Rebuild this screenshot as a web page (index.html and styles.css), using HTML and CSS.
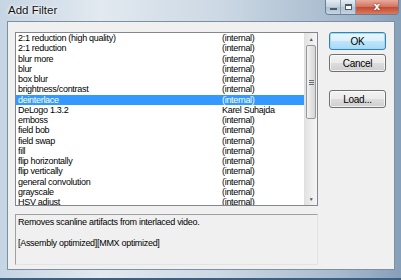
FILE: index.html
```html
<!DOCTYPE html>
<html lang="en">

<head>
    <meta charset="UTF-8">
    <link rel="stylesheet" href="styles.css">
    <title>Add Filter</title>
</head>

<body>
    <div class="window">
        <div class="titlebar">
            <span class="title">Add Filter</span>
            <div class="caption">
                <div class="cap min"><span class="min-glyph"></span></div>
                <div class="cap max"><span class="max-glyph"></span></div>
                <div class="cap close">x</div>
            </div>
        </div>

        <div class="client">
            <div class="left">
                <div class="list">
                    <div class="rows">
                        <div class="row"><span class="name">2:1 reduction (high quality)</span><span>(internal)</span></div>
                        <div class="row"><span class="name">2:1 reduction</span><span>(internal)</span></div>
                        <div class="row"><span class="name">blur more</span><span>(internal)</span></div>
                        <div class="row"><span class="name">blur</span><span>(internal)</span></div>
                        <div class="row"><span class="name">box blur</span><span>(internal)</span></div>
                        <div class="row"><span class="name">brightness/contrast</span><span>(internal)</span></div>
                        <div class="row selected"><span class="name">deinterlace</span><span>(internal)</span></div>
                        <div class="row"><span class="name">DeLogo 1.3.2</span><span>Karel Suhajda</span></div>
                        <div class="row"><span class="name">emboss</span><span>(internal)</span></div>
                        <div class="row"><span class="name">field bob</span><span>(internal)</span></div>
                        <div class="row"><span class="name">field swap</span><span>(internal)</span></div>
                        <div class="row"><span class="name">fill</span><span>(internal)</span></div>
                        <div class="row"><span class="name">flip horizontally</span><span>(internal)</span></div>
                        <div class="row"><span class="name">flip vertically</span><span>(internal)</span></div>
                        <div class="row"><span class="name">general convolution</span><span>(internal)</span></div>
                        <div class="row"><span class="name">grayscale</span><span>(internal)</span></div>
                        <div class="row"><span class="name">HSV adjust</span><span>(internal)</span></div>
                    </div>
                    <div class="scrollbar">
                        <div class="arrow">&#9650;</div>
                        <div class="track">
                            <div class="thumb"><span class="grip"></span></div>
                        </div>
                        <div class="arrow">&#9660;</div>
                    </div>
                </div>

                <div class="desc">
                    <p>Removes scanline artifacts from interlaced video.</p>
                    <p>[Assembly optimized][MMX optimized]</p>
                </div>
            </div>

            <div class="buttons">
                <div class="btn default">OK</div>
                <div class="btn">Cancel</div>
                <div class="btn load">Load...</div>
            </div>
        </div>
    </div>
</body>

</html>
```

FILE: styles.css
```css
* {
    margin: 0;
    padding: 0;
    box-sizing: border-box;
}

body {
    width: 401px;
    height: 280px;
    overflow: hidden;
    font-family: "Liberation Sans", Arial, sans-serif;
    background: #6f8fae;
}

.window {
    width: 401px;
    height: 280px;
    display: flex;
    flex-direction: column;
    padding: 0 6px 8px 7px;
    background: linear-gradient(to right, #c6d5e3 0%, #e2e9f0 25%, #ccd8e4 55%, #a6bacd 85%, #86a0b9 100%);
    border-bottom: 2px solid #3d5f80;
}

/* title bar */

.titlebar {
    height: 21px;
    display: flex;
    justify-content: space-between;
    align-items: flex-start;
}

.title {
    font-size: 11.5px;
    padding: 4px 0 0 1px;
    color: #111;
    text-shadow: 0 0 4px #fff, 0 0 2px #fff;
}

.caption {
    display: flex;
    margin-right: -4px;
    border: 1px solid #6d7f94;
    border-top: none;
    border-radius: 0 0 4px 4px;
    overflow: hidden;
}

.cap {
    height: 14px;
    width: 15px;
    display: flex;
    justify-content: center;
    align-items: center;
    background: linear-gradient(to bottom, #e4ebf2, #c3d0dd 50%, #aebfcf 51%, #c6d4e2);
    border-right: 1px solid #8b9cb0;
}

.min-glyph {
    width: 7px;
    height: 2px;
    margin-top: 4px;
    background: #fff;
    border: 1px solid #4c5b6b;
}

.max-glyph {
    width: 7px;
    height: 6px;
    border: 1px solid #4c5b6b;
    border-top-width: 2px;
    background: #fff;
}

.cap.close {
    width: 42px;
    border-right: none;
    background: linear-gradient(to bottom, #e9a99c, #d0725f 50%, #c24b33 51%, #d97a5e);
    color: #fff;
    font-family: "DejaVu Sans", sans-serif;
    font-weight: bold;
    font-size: 10px;
    line-height: 10px;
    text-shadow: 0 0 2px #6b1a0e;
}

/* client area */

.client {
    flex: 1;
    display: flex;
    gap: 11px;
    padding: 10px 0 0 7px;
    background: #f0f0f0;
    border: 1px solid #7d8fa3;
    font-size: 9px;
    letter-spacing: -0.3px;
    color: #000;
}

.left {
    width: 303px;
    display: flex;
    flex-direction: column;
    gap: 8px;
}

.list {
    height: 174px;
    display: flex;
    background: #fff;
    border: 1px solid #828790;
}

.rows {
    flex: 1;
    overflow: hidden;
}

.row {
    display: flex;
    height: 10.25px;
    line-height: 10.25px;
    padding-left: 2px;
    white-space: nowrap;
}

.row .name {
    width: 204px;
}

.row.selected {
    background: #3399ff;
    color: #fff;
}

.scrollbar {
    width: 13px;
    display: flex;
    flex-direction: column;
    background: linear-gradient(to right, #e3e3e3, #f5f5f5);
    border-left: 1px solid #e0e0e0;
}

.arrow {
    height: 12px;
    font-size: 5px;
    line-height: 12px;
    text-align: center;
    color: #555;
}

.track {
    flex: 1;
}

.thumb {
    height: 74px;
    margin: 0 1px;
    display: flex;
    justify-content: center;
    align-items: center;
    border: 1px solid #979797;
    border-radius: 2px;
    background: linear-gradient(to right, #f3f3f3, #e4e4e4 50%, #d6d6d6);
}

.grip {
    width: 5px;
    height: 5px;
    border-top: 1px solid #6e6e6e;
    border-bottom: 1px solid #6e6e6e;
    background: linear-gradient(#6e6e6e, #6e6e6e) center / 100% 1px no-repeat;
}

.desc {
    height: 51px;
    padding: 2px 2px;
    border: 1px solid #a0a0a0;
    border-right-color: #e3e3e3;
    border-bottom-color: #e3e3e3;
}

.desc p {
    line-height: 10px;
    margin-bottom: 11px;
}

/* buttons */

.buttons {
    width: 57px;
    display: flex;
    flex-direction: column;
    gap: 4px;
}

.btn {
    height: 18px;
    display: flex;
    justify-content: center;
    align-items: center;
    font-size: 10px;
    border: 1px solid #707070;
    border-radius: 3px;
    background: linear-gradient(to bottom, #f2f2f2, #ebebeb 50%, #dddddd 51%, #cfcfcf);
    box-shadow: inset 0 0 0 1px rgba(255, 255, 255, 0.7);
}

.btn.default {
    border-color: #3c7fb1;
    background: linear-gradient(to bottom, #eaf6fd, #d9f0fc 50%, #bee6fd 51%, #a7d9f5);
    box-shadow: inset 0 0 0 1px #9ddcf5;
}

.btn.load {
    margin-top: 14px;
}
```
